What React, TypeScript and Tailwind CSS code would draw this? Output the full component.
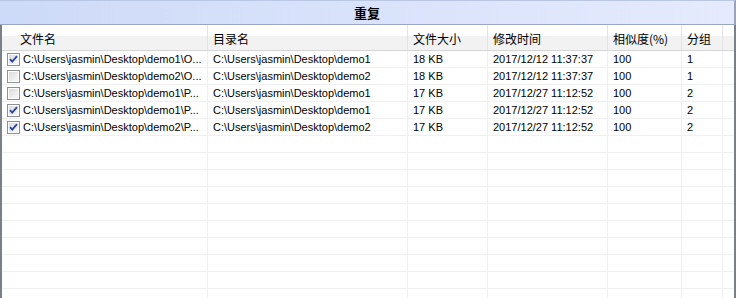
import React from "react";

const cols = [
  "w-[206px]",
  "w-[200px]",
  "w-[80px]",
  "w-[120px]",
  "w-[74px]",
  "w-[41px]",
];

const headers = ["文件名", "目录名", "文件大小", "修改时间", "相似度(%)", "分组"];

const rows: { checked: boolean; cells: string[] }[] = [
  { checked: true, cells: ["C:\\Users\\jasmin\\Desktop\\demo1\\O...", "C:\\Users\\jasmin\\Desktop\\demo1", "18 KB", "2017/12/12 11:37:37", "100", "1"] },
  { checked: false, cells: ["C:\\Users\\jasmin\\Desktop\\demo2\\O...", "C:\\Users\\jasmin\\Desktop\\demo2", "18 KB", "2017/12/12 11:37:37", "100", "1"] },
  { checked: false, cells: ["C:\\Users\\jasmin\\Desktop\\demo1\\P...", "C:\\Users\\jasmin\\Desktop\\demo1", "17 KB", "2017/12/27 11:12:52", "100", "2"] },
  { checked: true, cells: ["C:\\Users\\jasmin\\Desktop\\demo1\\P...", "C:\\Users\\jasmin\\Desktop\\demo1", "17 KB", "2017/12/27 11:12:52", "100", "2"] },
  { checked: true, cells: ["C:\\Users\\jasmin\\Desktop\\demo2\\P...", "C:\\Users\\jasmin\\Desktop\\demo2", "17 KB", "2017/12/27 11:12:52", "100", "2"] },
];

function CheckBox({ checked }: { checked: boolean }) {
  return (
    <svg width="13" height="13" viewBox="0 0 13 13" className="shrink-0">
      <defs>
        <linearGradient id={checked ? "cbg1" : "cbg0"} x1="0" y1="0" x2="1" y2="1">
          <stop offset="0" stopColor="#dcdcdc" />
          <stop offset="1" stopColor="#f8f8f8" />
        </linearGradient>
      </defs>
      <rect x="0.5" y="0.5" width="12" height="12" fill="#ffffff" stroke="#8c9097" />
      <rect x="2" y="2" width="9" height="9" fill={`url(#${checked ? "cbg1" : "cbg0"})`} />
      {checked && (
        <path d="M3 6.2 L5.2 8.6 L10 3.2" fill="none" stroke="#2a44a8" strokeWidth="1.8" />
      )}
    </svg>
  );
}

export default function App() {
  const emptyRows = Array.from({ length: 10 });
  return (
    <div
      className="w-[736px] h-[298px] overflow-hidden flex flex-col bg-white text-black"
      style={{ fontFamily: '"Liberation Sans", "Noto Sans CJK SC", sans-serif' }}
    >
      <div className="h-[25px] shrink-0 flex items-center justify-center pb-[1px] bg-gradient-to-r from-[#cddaf8] to-[#e5ebfd] border-t border-[#b9c6e4] border-r-2 border-r-[#9aa3b8] border-b border-b-[#9aa6c2]">
        <span className="text-[13px] font-bold leading-none" style={{ fontFamily: '"Noto Sans CJK SC", sans-serif' }}>
          重复
        </span>
      </div>
      <div className="flex-1 flex flex-col border-l-2 border-r-2 border-[#7b7f88] overflow-hidden">
        <div className="h-[26px] shrink-0 flex border-b border-[#d5d5d5] bg-[linear-gradient(#ffffff_0%,#ffffff_45%,#f2f2f2_45%,#f2f2f2_100%)]">
          {headers.map((h, i) => (
            <div
              key={i}
              className={`${cols[i]} shrink-0 border-r border-[#e3e3e3] flex items-center pt-[3px] ${i === 0 ? "pl-[18px]" : "pl-[5px]"} text-[12px] leading-none`}
              style={{ fontFamily: '"Noto Sans CJK SC", sans-serif' }}
            >
              {h}
            </div>
          ))}
          <div className="flex-1" />
        </div>
        {rows.map((r, ri) => (
          <div key={ri} className="h-[17px] shrink-0 flex border-b border-[#f0f0f0] text-[11px] leading-none">
            {r.cells.map((c, ci) => (
              <div
                key={ci}
                className={`${cols[ci]} shrink-0 border-r border-[#f0f0f0] flex items-center whitespace-nowrap overflow-hidden pl-[5px]`}
              >
                {ci === 0 && (
                  <span className="mr-[3px] flex">
                    <CheckBox checked={r.checked} />
                  </span>
                )}
                {c}
              </div>
            ))}
            <div className="flex-1" />
          </div>
        ))}
        {emptyRows.map((_, ri) => (
          <div key={ri} className="h-[17px] shrink-0 flex border-b border-[#f0f0f0]">
            {cols.map((w, ci) => (
              <div key={ci} className={`${w} shrink-0 border-r border-[#f0f0f0]`} />
            ))}
            <div className="flex-1" />
          </div>
        ))}
      </div>
    </div>
  );
}
